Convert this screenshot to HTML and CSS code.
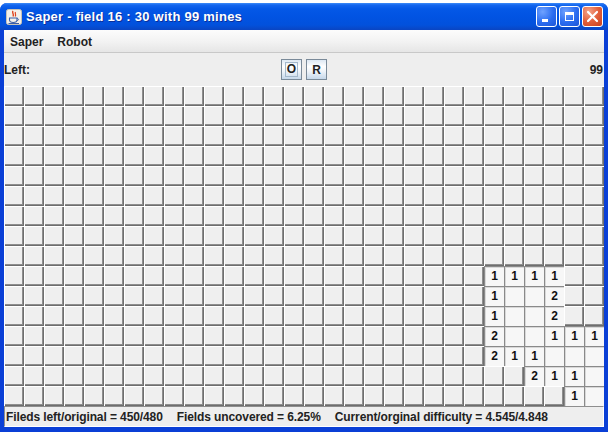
FILE: index.html
```html
<!DOCTYPE html>
<html>
<head>
<meta charset="utf-8">
<title>Saper</title>
<link rel="stylesheet" href="styles.css">
</head>
<body>
<div class="window">
  <div class="titlebar">
    <svg class="appicon" width="16" height="16" viewBox="0 0 16 16">
      <rect x="0.5" y="0.5" width="15" height="15" rx="2" fill="#f4f1ea" stroke="#c9c3b5"/>
      <path d="M7 2 C5.5 4 8.5 5 7 7.5" fill="none" stroke="#e0421b" stroke-width="1.4"/>
      <path d="M9.5 3 C8.5 4.5 10.5 5.5 9.2 7.5" fill="none" stroke="#e0421b" stroke-width="1.2"/>
      <path d="M3.5 9 H11 V11 C11 12.5 9.5 13.5 7.2 13.5 C5 13.5 3.5 12.5 3.5 11 Z" fill="none" stroke="#3b5fa8" stroke-width="1.1"/>
      <path d="M11 9.5 C13 9.5 13 11.5 11 11.5" fill="none" stroke="#3b5fa8" stroke-width="1"/>
      <path d="M2.5 14.5 H13" stroke="#3b5fa8" stroke-width="1"/>
    </svg>
    <span class="title">Saper - field 16 : 30 with 99 mines</span>
    <div class="controls">
      <span class="ctl min"><i></i></span>
      <span class="ctl max"><i></i></span>
      <span class="ctl close">
        <svg width="13" height="13" viewBox="0 0 13 13"><path d="M2 2 L11 11 M11 2 L2 11" stroke="#fff" stroke-width="2.2" stroke-linecap="round"/></svg>
      </span>
    </div>
  </div>
  <div class="frame">
    <div class="menubar"><span class="menu">Saper</span><span class="menu">Robot</span></div>
    <div class="toolbar">
      <span class="lbl">Left:</span>
      <div class="btns"><button class="btn focused"><span>O</span></button><button class="btn"><span>R</span></button></div>
      <span class="count">99</span>
    </div>
    <div class="board">
      <div class="row"><b></b><b></b><b></b><b></b><b></b><b></b><b></b><b></b><b></b><b></b><b></b><b></b><b></b><b></b><b></b><b></b><b></b><b></b><b></b><b></b><b></b><b></b><b></b><b></b><b></b><b></b><b></b><b></b><b></b><b></b></div>
      <div class="row"><b></b><b></b><b></b><b></b><b></b><b></b><b></b><b></b><b></b><b></b><b></b><b></b><b></b><b></b><b></b><b></b><b></b><b></b><b></b><b></b><b></b><b></b><b></b><b></b><b></b><b></b><b></b><b></b><b></b><b></b></div>
      <div class="row"><b></b><b></b><b></b><b></b><b></b><b></b><b></b><b></b><b></b><b></b><b></b><b></b><b></b><b></b><b></b><b></b><b></b><b></b><b></b><b></b><b></b><b></b><b></b><b></b><b></b><b></b><b></b><b></b><b></b><b></b></div>
      <div class="row"><b></b><b></b><b></b><b></b><b></b><b></b><b></b><b></b><b></b><b></b><b></b><b></b><b></b><b></b><b></b><b></b><b></b><b></b><b></b><b></b><b></b><b></b><b></b><b></b><b></b><b></b><b></b><b></b><b></b><b></b></div>
      <div class="row"><b></b><b></b><b></b><b></b><b></b><b></b><b></b><b></b><b></b><b></b><b></b><b></b><b></b><b></b><b></b><b></b><b></b><b></b><b></b><b></b><b></b><b></b><b></b><b></b><b></b><b></b><b></b><b></b><b></b><b></b></div>
      <div class="row"><b></b><b></b><b></b><b></b><b></b><b></b><b></b><b></b><b></b><b></b><b></b><b></b><b></b><b></b><b></b><b></b><b></b><b></b><b></b><b></b><b></b><b></b><b></b><b></b><b></b><b></b><b></b><b></b><b></b><b></b></div>
      <div class="row"><b></b><b></b><b></b><b></b><b></b><b></b><b></b><b></b><b></b><b></b><b></b><b></b><b></b><b></b><b></b><b></b><b></b><b></b><b></b><b></b><b></b><b></b><b></b><b></b><b></b><b></b><b></b><b></b><b></b><b></b></div>
      <div class="row"><b></b><b></b><b></b><b></b><b></b><b></b><b></b><b></b><b></b><b></b><b></b><b></b><b></b><b></b><b></b><b></b><b></b><b></b><b></b><b></b><b></b><b></b><b></b><b></b><b></b><b></b><b></b><b></b><b></b><b></b></div>
      <div class="row"><b></b><b></b><b></b><b></b><b></b><b></b><b></b><b></b><b></b><b></b><b></b><b></b><b></b><b></b><b></b><b></b><b></b><b></b><b></b><b></b><b></b><b></b><b></b><b></b><b></b><b></b><b></b><b></b><b></b><b></b></div>
      <div class="row"><b></b><b></b><b></b><b></b><b></b><b></b><b></b><b></b><b></b><b></b><b></b><b></b><b></b><b></b><b></b><b></b><b></b><b></b><b></b><b></b><b></b><b></b><b></b><b></b><b class="o">1</b><b class="o">1</b><b class="o">1</b><b class="o">1</b><b></b><b></b></div>
      <div class="row"><b></b><b></b><b></b><b></b><b></b><b></b><b></b><b></b><b></b><b></b><b></b><b></b><b></b><b></b><b></b><b></b><b></b><b></b><b></b><b></b><b></b><b></b><b></b><b></b><b class="o">1</b><b class="o"></b><b class="o"></b><b class="o">2</b><b></b><b></b></div>
      <div class="row"><b></b><b></b><b></b><b></b><b></b><b></b><b></b><b></b><b></b><b></b><b></b><b></b><b></b><b></b><b></b><b></b><b></b><b></b><b></b><b></b><b></b><b></b><b></b><b></b><b class="o">1</b><b class="o"></b><b class="o"></b><b class="o">2</b><b></b><b></b></div>
      <div class="row"><b></b><b></b><b></b><b></b><b></b><b></b><b></b><b></b><b></b><b></b><b></b><b></b><b></b><b></b><b></b><b></b><b></b><b></b><b></b><b></b><b></b><b></b><b></b><b></b><b class="o">2</b><b class="o"></b><b class="o"></b><b class="o">1</b><b class="o">1</b><b class="o">1</b></div>
      <div class="row"><b></b><b></b><b></b><b></b><b></b><b></b><b></b><b></b><b></b><b></b><b></b><b></b><b></b><b></b><b></b><b></b><b></b><b></b><b></b><b></b><b></b><b></b><b></b><b></b><b class="o">2</b><b class="o">1</b><b class="o">1</b><b class="o"></b><b class="o"></b><b class="o"></b></div>
      <div class="row"><b></b><b></b><b></b><b></b><b></b><b></b><b></b><b></b><b></b><b></b><b></b><b></b><b></b><b></b><b></b><b></b><b></b><b></b><b></b><b></b><b></b><b></b><b></b><b></b><b></b><b></b><b class="o">2</b><b class="o">1</b><b class="o">1</b><b class="o"></b></div>
      <div class="row"><b></b><b></b><b></b><b></b><b></b><b></b><b></b><b></b><b></b><b></b><b></b><b></b><b></b><b></b><b></b><b></b><b></b><b></b><b></b><b></b><b></b><b></b><b></b><b></b><b></b><b></b><b></b><b></b><b class="o">1</b><b class="o"></b></div>
    </div>
    <div class="status"><span>Fileds left/original = 450/480</span><span>Fields uncovered = 6.25%</span><span>Current/orginal difficulty = 4.545/4.848</span></div>
  </div>
</div>
</body>
</html>
```
FILE: styles.css
```css
html, body {
  margin: 0;
  padding: 0;
  background: #ffffff;
  width: 610px;
  height: 432px;
  overflow: hidden;
}
body {
  font-family: "Liberation Sans", Arial, sans-serif;
}
.window {
  margin-top: 3px;
  width: 608px;
  border-radius: 7px 7px 0 0;
  background: #0a3fd6;
  overflow: hidden;
}
.titlebar {
  height: 27px;
  display: flex;
  align-items: center;
  padding-left: 6px;
  background: linear-gradient(#3d8cf7 0px, #1466ee 2px, #0458e6 6px, #0153e2 14px, #0251dc 22px, #0a45c2 27px);
  color: #fff;
}
.appicon {
  flex: none;
  margin-right: 4px;
}
.title {
  font-weight: bold;
  font-size: 13px;
  letter-spacing: 0.25px;
  text-shadow: 1px 1px 0 #0a2f9a;
  flex: 1;
  white-space: nowrap;
}
.controls {
  display: flex;
  gap: 2px;
  padding-right: 5px;
}
.ctl {
  width: 21px;
  height: 21px;
  box-sizing: border-box;
  border: 1px solid #fff;
  border-radius: 3px;
  display: flex;
  align-items: center;
  justify-content: center;
  background: radial-gradient(circle at 30% 25%, #6fa2ff 0%, #2a6cf0 55%, #1d55d6 100%);
  position: relative;
}
.ctl.min i {
  position: absolute;
  left: 5px;
  top: 12px;
  width: 6px;
  height: 3px;
  background: #fff;
}
.ctl.max i {
  width: 9px;
  height: 9px;
  box-sizing: border-box;
  border: 1px solid #fff;
  border-top-width: 3px;
}
.ctl.close {
  background: radial-gradient(circle at 30% 25%, #f4a48a 0%, #e2603c 50%, #c8401c 100%);
}
.frame {
  padding: 0 4px 5px 4px;
}
.menubar {
  height: 23px;
  border-bottom: 1px solid #c8c8c8;
  background: linear-gradient(#fcfcfc, #f3f3f3 50%, #e6e6e6);
  display: flex;
  align-items: center;
  gap: 14px;
  padding-left: 6px;
  padding-top: 1px;
  box-sizing: border-box;
  font-size: 12px;
  font-weight: bold;
  color: #222;
}
.toolbar {
  height: 33px;
  background: #eeeeee;
  display: grid;
  grid-template-columns: 1fr auto 1fr;
  align-items: center;
  font-size: 12px;
  font-weight: bold;
  color: #222;
}
.count {
  text-align: right;
  padding-right: 1px;
}
.btns {
  display: flex;
  gap: 4px;
}
.btn {
  width: 21px;
  height: 21px;
  padding: 0;
  margin: 0;
  border: 1px solid #7a8a99;
  background: linear-gradient(#dde8f3 0%, #ffffff 35%, #eef3f9 60%, #c6d8ea 100%);
  font-family: "Liberation Sans", Arial, sans-serif;
  font-size: 12px;
  font-weight: bold;
  color: #222;
  display: flex;
  align-items: center;
  justify-content: center;
}
.btn.focused span {
  border: 1px solid #a3b8cc;
  padding: 0 1px;
  line-height: 13px;
}
.board {
  background: #eeeeee;
}
.row {
  display: grid;
  grid-template-columns: repeat(30, 20px);
  height: 20px;
}
.row b {
  display: block;
  width: 20px;
  height: 20px;
  box-sizing: border-box;
  background: #efefef;
  box-shadow: inset 1px 1px 0 #ffffff, inset -1px -1px 0 #6e6e6e, inset -2px -2px 0 #8e8e8e;
}
.row b.o {
  background: #f7f7f7;
  box-shadow: inset 1px 1px 0 #8a8a8a, inset 2px 2px 0 #d8d8d8;
  font-size: 12px;
  font-weight: bold;
  color: #111;
  text-align: center;
  line-height: 20px;
  padding-left: 1px;
}
.status {
  height: 21px;
  box-sizing: border-box;
  background: #eeeeee;
  border-top: 1px solid #8e8e8e;
  border-left: 1px solid #8e8e8e;
  border-right: 1px solid #ffffff;
  border-bottom: 1px solid #ffffff;
  display: flex;
  align-items: center;
  gap: 14px;
  padding-left: 1px;
  font-size: 12px;
  font-weight: bold;
  letter-spacing: -0.1px;
  color: #222;
  white-space: nowrap;
}
```
